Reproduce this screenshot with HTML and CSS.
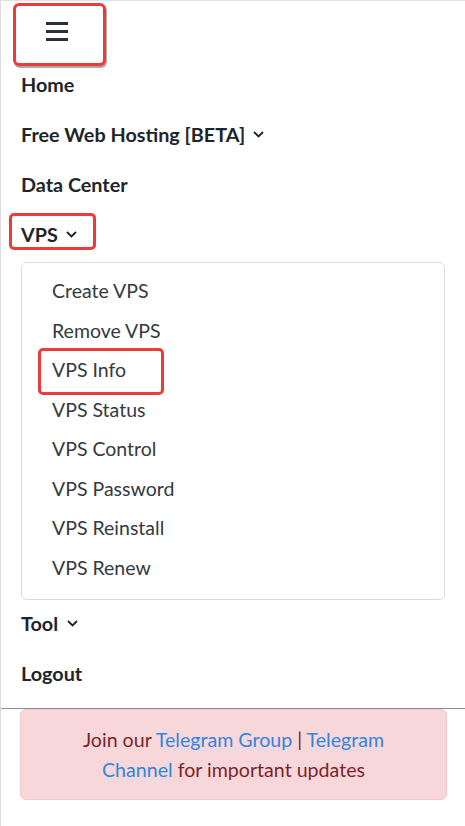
FILE: index.html
```html
<!DOCTYPE html>
<html lang="en">
<head>
<meta charset="utf-8">
<title>Menu</title>
<link rel="stylesheet" href="styles.css">
</head>
<body>
<div class="page">
  <nav class="nav">
    <div class="toggler-row">
      <button class="toggler" aria-label="Toggle navigation">
        <svg width="22" height="19" viewBox="0 0 22 19" aria-hidden="true">
          <rect x="0" y="0" width="22" height="3" fill="#2b2f36"/>
          <rect x="0" y="8" width="22" height="3" fill="#2b2f36"/>
          <rect x="0" y="16" width="22" height="3" fill="#2b2f36"/>
        </svg>
      </button>
    </div>
    <ul class="menu">
      <li class="item"><a href="#">Home</a></li>
      <li class="item"><a href="#">Free Web Hosting [BETA]<svg class="chev" width="11" height="7" viewBox="0 0 11 7"><polyline points="1,1 5.5,5.5 10,1" fill="none" stroke="#222" stroke-width="1.8"/></svg></a></li>
      <li class="item"><a href="#">Data Center</a></li>
      <li class="item"><a href="#" class="marked">VPS<svg class="chev" width="11" height="7" viewBox="0 0 11 7"><polyline points="1,1 5.5,5.5 10,1" fill="none" stroke="#222" stroke-width="1.8"/></svg><span class="mark mark-vps"></span></a></li>
      <li class="dropdown">
        <a href="#">Create VPS</a>
        <a href="#">Remove VPS</a>
        <a href="#" class="marked">VPS Info<span class="mark mark-info"></span></a>
        <a href="#">VPS Status</a>
        <a href="#">VPS Control</a>
        <a href="#">VPS Password</a>
        <a href="#">VPS Reinstall</a>
        <a href="#">VPS Renew</a>
      </li>
      <li class="item"><a href="#">Tool<svg class="chev chev-tool" width="11" height="7" viewBox="0 0 11 7"><polyline points="1,1 5.5,5.5 10,1" fill="none" stroke="#222" stroke-width="1.8"/></svg></a></li>
      <li class="item"><a href="#">Logout</a></li>
    </ul>
  </nav>
  <div class="alert">
    <p class="alert-text">Join our <a href="#">Telegram Group</a> | <a href="#">Telegram Channel</a> for important updates</p>
  </div>
</div>
</body>
</html>
```
FILE: styles.css
```css
* { box-sizing: border-box; }
html, body { margin: 0; padding: 0; background: #fff; }
body {
  font-family: Lato, "Noto Sans", sans-serif;
  font-size: 19.5px;
  color: #212529;
}
.page {
  min-height: 826px;
  border-left: 1px solid #dcdcdc;
  border-top: 1px solid #e2e2e2;
}
.nav {
  border-bottom: 1px solid #8c9096;
  padding-bottom: 10px;
}
.toggler-row {
  height: 58px;
  padding-left: 12px;
  padding-top: 2px;
}
.toggler {
  width: 93px;
  height: 63px;
  border: 3px solid #ec3b3b;
  border-radius: 6px;
  background: #fff;
  box-shadow: 1px 2px 1px rgba(0, 0, 0, 0.35);
  display: flex;
  align-items: flex-start;
  padding: 16px 0 0 30px;
  position: relative;
  z-index: 1;
}
.toggler svg { display: block; }
.menu {
  list-style: none;
  margin: 0;
  padding: 0 20px;
}
.item {
  height: 50px;
  display: flex;
  align-items: center;
}
.item a {
  color: #212529;
  font-size: 19.8px;
  font-weight: 700;
  text-decoration: none;
  display: inline-flex;
  align-items: center;
  gap: 8px;
  line-height: 24px;
}
.chev { display: block; margin-top: 1px; }
.chev-tool { margin-left: 1px; }
.marked { position: relative; }
.mark {
  position: absolute;
  border: 3px solid #ec3b3b;
  border-radius: 5px;
  pointer-events: none;
}
.mark-vps { left: -12px; width: 87px; top: -9px; bottom: -4px; }
.mark-info { left: 16px; width: 126px; top: -2px; height: 47px; }
.dropdown {
  margin: 3px 0 -2px;
  border: 1px solid #dcdcdc;
  border-radius: 6px;
  padding: 8px 0 12px;
  display: flex;
  flex-direction: column;
}
.dropdown a {
  height: 39.5px;
  display: flex;
  align-items: center;
  padding-left: 30px;
  color: #343a40;
  text-decoration: none;
}
.alert {
  margin: 0 18px 0 19px;
  background: #f8d7da;
  border: 1px solid #f5c6cb;
  border-radius: 6px;
  color: #7d1f2a;
  text-align: center;
  padding: 15px 40px 14px;
}
.alert-text {
  margin: 0;
  font-size: 19.6px;
  line-height: 30px;
}
.alert a {
  color: #2f86dd;
  text-decoration: none;
  border-bottom: 1px solid #dde0e8;
}
```
